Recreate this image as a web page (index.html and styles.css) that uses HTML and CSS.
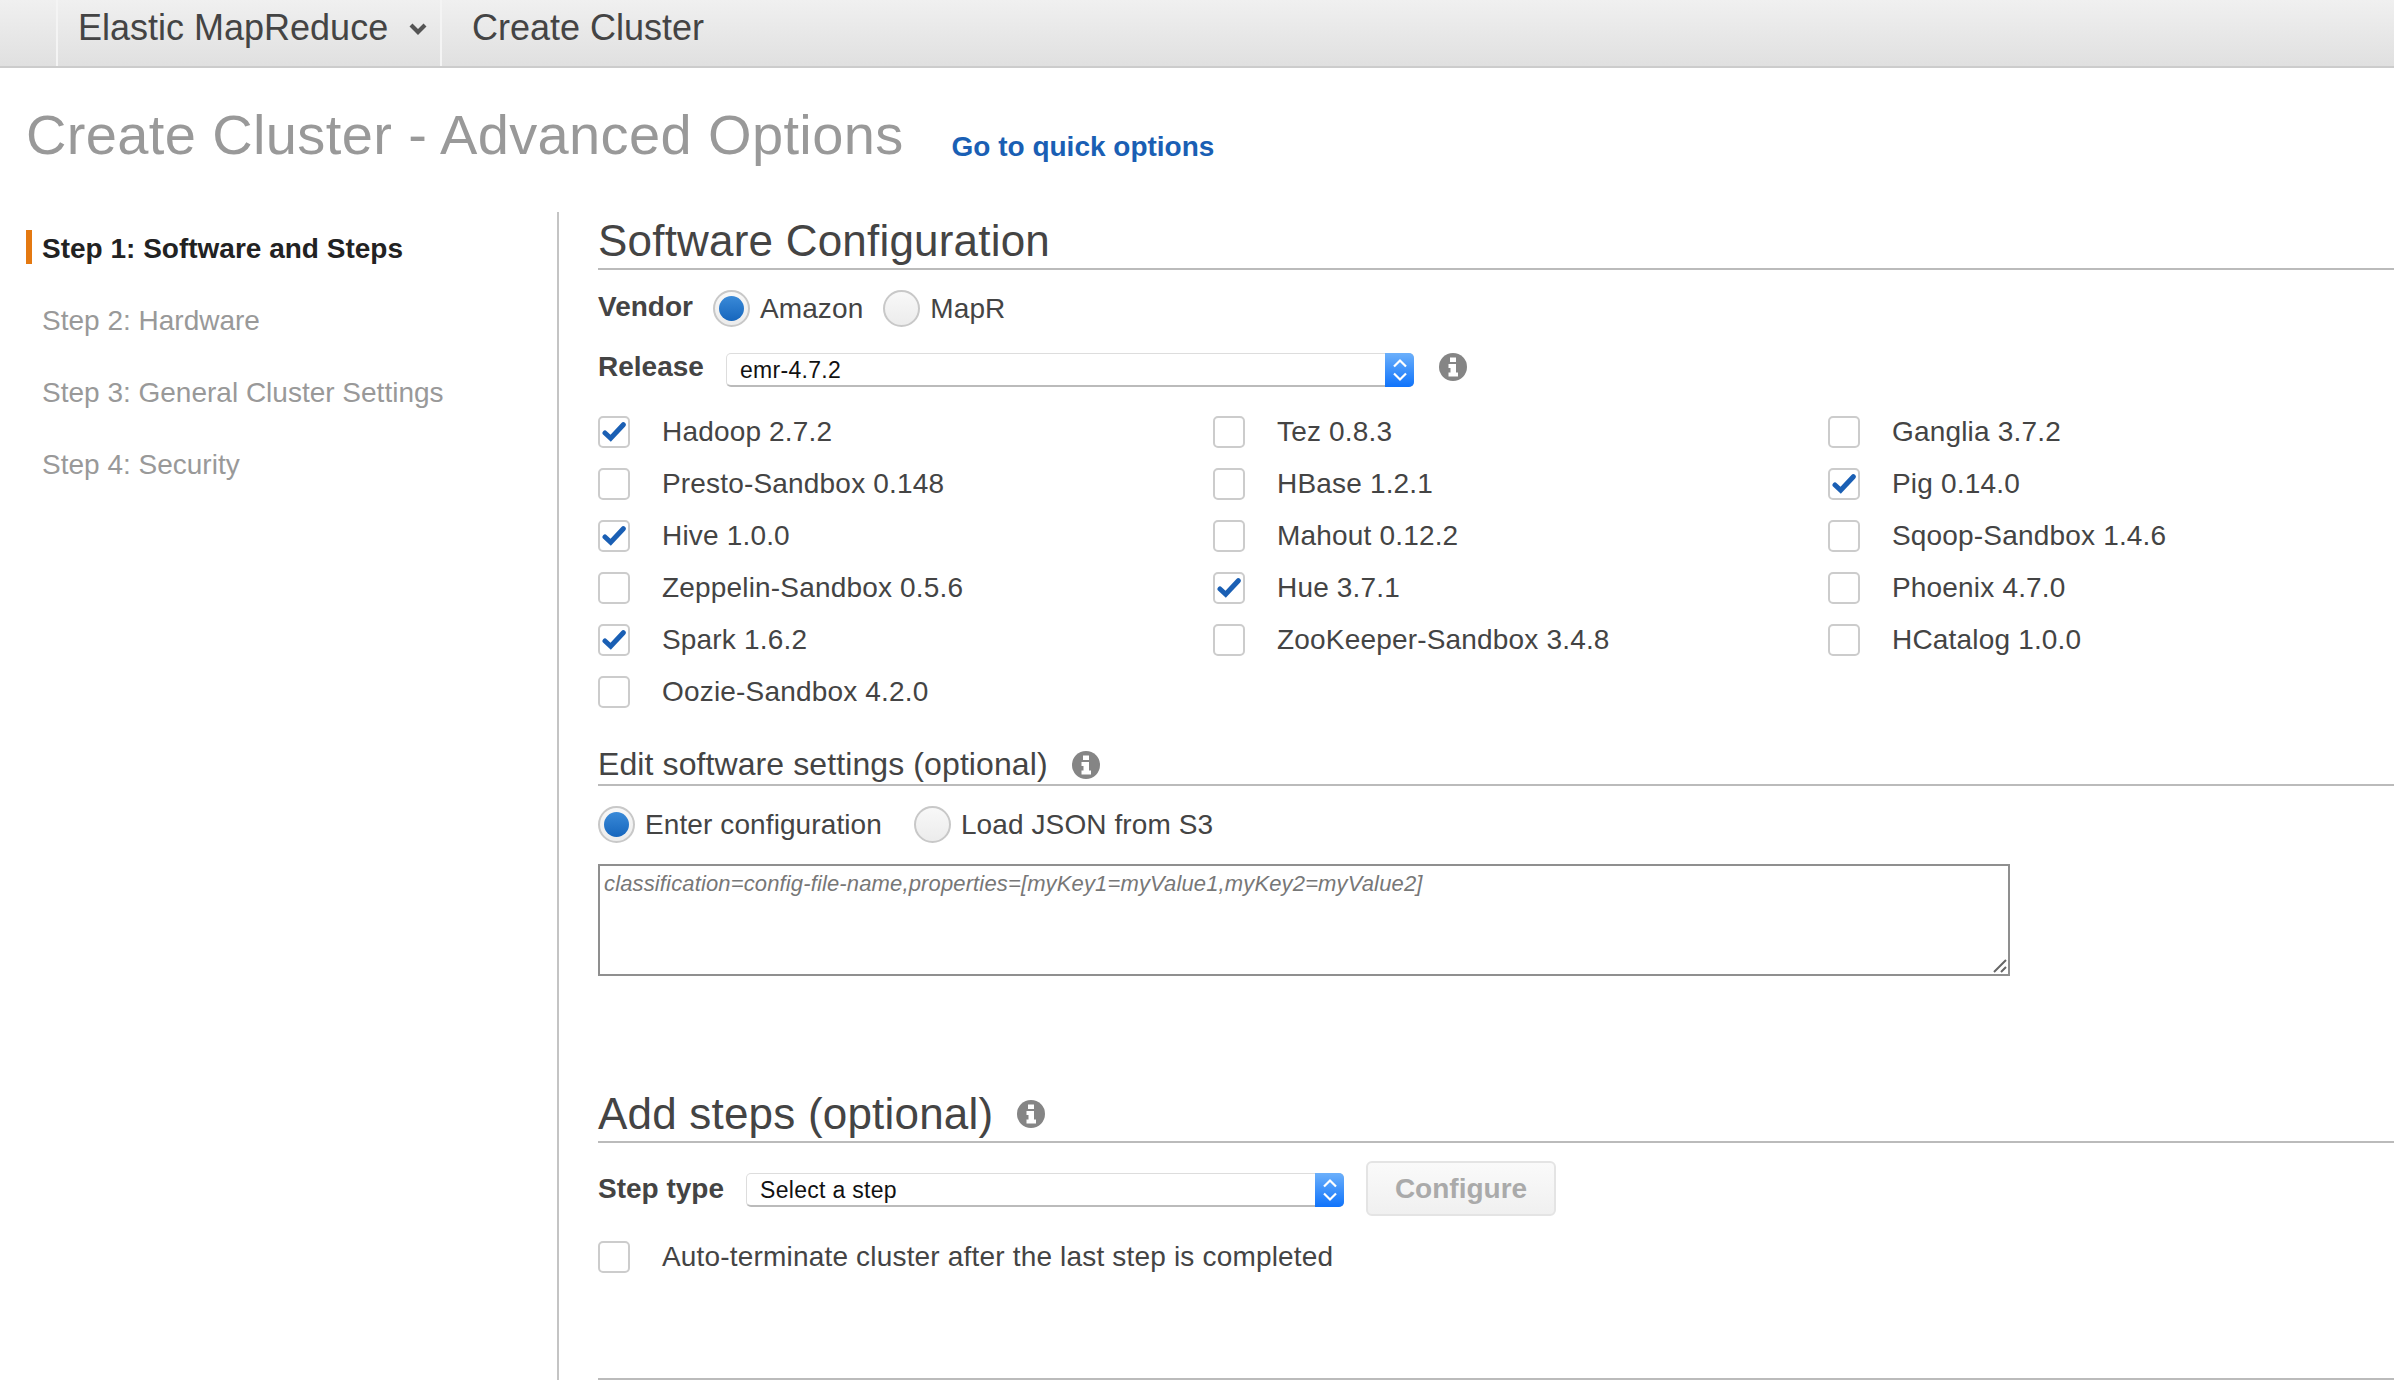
FILE: index.html
```html
<!DOCTYPE html>
<html lang="en">
<head>
    <meta charset="UTF-8">
    <meta name="viewport" content="width=device-width, initial-scale=1.0">
    <title>Create Cluster - Advanced Options</title>
    <link rel="stylesheet" href="styles.css">
</head>

<body>
    <!-- Service bar -->
    <nav class="topbar">
        <div class="topbar-item service">
            Elastic MapReduce
            <svg class="caret" width="18" height="12" viewBox="0 0 18 12"><path d="M2 2 L9 9 L16 2" fill="none" stroke="#555" stroke-width="4.200"/></svg>
        </div>
        <div class="topbar-item">Create Cluster</div>
    </nav>

    <header class="page-head">
        <h1>Create Cluster - Advanced Options</h1>
        <a class="quick-link" href="#">Go to quick options</a>
    </header>

    <div class="wizard">
        <aside class="steps">
            <div class="step active">Step 1: Software and Steps</div>
            <div class="step">Step 2: Hardware</div>
            <div class="step">Step 3: General Cluster Settings</div>
            <div class="step">Step 4: Security</div>
        </aside>

        <main class="content">
            <h2 class="section-title">Software Configuration</h2>

            <div class="field vendor-row">
                <span class="field-label">Vendor</span>
                <span class="radio checked"></span><span class="radio-text">Amazon</span>
                <span class="radio"></span><span class="radio-text">MapR</span>
            </div>

            <div class="field release-row">
                <span class="field-label">Release</span>
                <div class="select release-select">
                    <span class="select-value">emr-4.7.2</span>
                    <span class="select-arrows">
                        <svg width="18" height="26" viewBox="0 0 18 26"><path d="M3 9.500 L9 3.500 L15 9.500 M3 16.500 L9 22.500 L15 16.500" fill="none" stroke="#fff" stroke-width="2.200"/></svg>
                    </span>
                </div>
                <svg class="info release-info" width="28" height="28" viewBox="0 0 28 28"><circle cx="14" cy="14" r="14" fill="#858585"/><path d="M11 4.500h6v4.500h-6z M9.500 11h7.500v8.500h2v4h-9.500v-4h2v-4.500h-2z" fill="#fff"/></svg>
            </div>

            <div class="app-grid">
                <label class="app"><span class="check on"><svg width="24" height="24" viewBox="0 0 24 24"><path d="M3 13 L8.700 18.300 L21.300 4.700" fill="none" stroke="#1a5fb4" stroke-width="5" stroke-linecap="round"/></svg></span>Hadoop 2.7.2</label>
                <label class="app"><span class="check"></span>Tez 0.8.3</label>
                <label class="app"><span class="check"></span>Ganglia 3.7.2</label>

                <label class="app"><span class="check"></span>Presto-Sandbox 0.148</label>
                <label class="app"><span class="check"></span>HBase 1.2.1</label>
                <label class="app"><span class="check on"><svg width="24" height="24" viewBox="0 0 24 24"><path d="M3 13 L8.700 18.300 L21.300 4.700" fill="none" stroke="#1a5fb4" stroke-width="5" stroke-linecap="round"/></svg></span>Pig 0.14.0</label>

                <label class="app"><span class="check on"><svg width="24" height="24" viewBox="0 0 24 24"><path d="M3 13 L8.700 18.300 L21.300 4.700" fill="none" stroke="#1a5fb4" stroke-width="5" stroke-linecap="round"/></svg></span>Hive 1.0.0</label>
                <label class="app"><span class="check"></span>Mahout 0.12.2</label>
                <label class="app"><span class="check"></span>Sqoop-Sandbox 1.4.6</label>

                <label class="app"><span class="check"></span>Zeppelin-Sandbox 0.5.6</label>
                <label class="app"><span class="check on"><svg width="24" height="24" viewBox="0 0 24 24"><path d="M3 13 L8.700 18.300 L21.300 4.700" fill="none" stroke="#1a5fb4" stroke-width="5" stroke-linecap="round"/></svg></span>Hue 3.7.1</label>
                <label class="app"><span class="check"></span>Phoenix 4.7.0</label>

                <label class="app"><span class="check on"><svg width="24" height="24" viewBox="0 0 24 24"><path d="M3 13 L8.700 18.300 L21.300 4.700" fill="none" stroke="#1a5fb4" stroke-width="5" stroke-linecap="round"/></svg></span>Spark 1.6.2</label>
                <label class="app"><span class="check"></span>ZooKeeper-Sandbox 3.4.8</label>
                <label class="app"><span class="check"></span>HCatalog 1.0.0</label>

                <label class="app"><span class="check"></span>Oozie-Sandbox 4.2.0</label>
            </div>

            <h3 class="sub-title">
                Edit software settings (optional)
                <svg class="info" width="28" height="28" viewBox="0 0 28 28"><circle cx="14" cy="14" r="14" fill="#858585"/><path d="M11 4.500h6v4.500h-6z M9.500 11h7.500v8.500h2v4h-9.500v-4h2v-4.500h-2z" fill="#fff"/></svg>
            </h3>

            <div class="field config-row">
                <span class="radio checked"></span><span class="radio-text">Enter configuration</span>
                <span class="radio"></span><span class="radio-text">Load JSON from S3</span>
            </div>

            <div class="config-box">
                <span class="placeholder">classification=config-file-name,properties=[myKey1=myValue1,myKey2=myValue2]</span>
                <svg class="grip" width="16" height="16" viewBox="0 0 16 16"><path d="M2 14 L14 2 M9 14 L14 9" stroke="#666" stroke-width="2"/></svg>
            </div>

            <h2 class="section-title steps-title">
                Add steps (optional)
                <svg class="info" width="28" height="28" viewBox="0 0 28 28"><circle cx="14" cy="14" r="14" fill="#858585"/><path d="M11 4.500h6v4.500h-6z M9.500 11h7.500v8.500h2v4h-9.500v-4h2v-4.500h-2z" fill="#fff"/></svg>
            </h2>

            <div class="field step-row">
                <span class="field-label">Step type</span>
                <div class="select step-select">
                    <span class="select-value">Select a step</span>
                    <span class="select-arrows">
                        <svg width="18" height="26" viewBox="0 0 18 26"><path d="M3 9.500 L9 3.500 L15 9.500 M3 16.500 L9 22.500 L15 16.500" fill="none" stroke="#fff" stroke-width="2.200"/></svg>
                    </span>
                </div>
                <button class="configure" type="button" disabled>Configure</button>
            </div>

            <label class="app auto-term"><span class="check"></span>Auto-terminate cluster after the last step is completed</label>

            <div class="bottom-rule"></div>
        </main>
    </div>
</body>
</html>
```

FILE: styles.css
```css
* {
    box-sizing: border-box;
}

html, body {
    height: 1380px;
    overflow: hidden;
}

body {
    margin: 0;
    background-color: #fff;
    color: #444;
    font-family: "Liberation Sans", Arial, sans-serif;
    font-size: 28px;
}

/* service bar */
.topbar {
    display: flex;
    height: 68px;
    padding-left: 56px;
    background: linear-gradient(#f0f0f0, #e0e0e0);
    border-bottom: 2px solid #ccc;
}

.topbar-item {
    display: flex;
    align-items: center;
    padding: 0 32px 10px 30px;
    border-left: 2px solid #f4f4f4;
    font-size: 36px;
    color: #444;
}

.topbar-item.service {
    width: 384px;
    gap: 21px;
    padding: 0 0 10px 20px;
}

.caret {
    margin-top: 2px;
}

/* page title */
.page-head {
    display: flex;
    align-items: flex-start;
    height: 144px;
    padding: 34px 0 0 26px;
}

h1 {
    margin: 0;
    font-size: 56px;
    font-weight: normal;
    color: #999;
    letter-spacing: 0.37px;
}

.quick-link {
    margin: 29px 0 0 48px;
    font-size: 28px;
    font-weight: bold;
    color: #1a5fb4;
    text-decoration: none;
}

/* layout */
.wizard {
    display: flex;
    height: 1168px;
}

.steps {
    width: 559px;
    flex: none;
    padding: 18px 0 0 26px;
    border-right: 2px solid #c4c4c4;
}

.step {
    height: 34px;
    line-height: 37px;
    margin-bottom: 38px;
    padding-left: 10px;
    border-left: 6px solid transparent;
    color: #999;
}

.step.active {
    border-left-color: #e47911;
    color: #222;
    font-weight: bold;
}

.content {
    flex: 1;
    padding-left: 39px;
}

/* headings */
.section-title {
    display: flex;
    align-items: center;
    gap: 24px;
    height: 58px;
    margin: 0;
    padding-top: 2px;
    border-bottom: 2px solid #bbb;
    font-size: 44px;
    font-weight: normal;
    color: #444;
    letter-spacing: 0.2px;
}

.sub-title {
    display: flex;
    align-items: center;
    gap: 24px;
    height: 44px;
    margin: 24px 0 0;
    padding-top: 3px;
    border-bottom: 2px solid #bbb;
    font-size: 32px;
    font-weight: normal;
    color: #444;
    letter-spacing: 0.1px;
}

/* form rows */
.field {
    display: flex;
    align-items: center;
}

.field-label {
    font-weight: bold;
    color: #444;
}

.vendor-row {
    height: 37px;
    margin-top: 20px;
}

.vendor-row .field-label {
    width: 115px;
    margin-top: -4px;
}

.release-row {
    height: 34px;
    margin-top: 26px;
}

.release-row .field-label {
    width: 128px;
    margin-top: -6px;
}

.radio {
    flex: none;
    position: relative;
    width: 37px;
    height: 37px;
    border: 2px solid #c8c8c8;
    border-radius: 50%;
    background: linear-gradient(#f8f8f8, #ececec);
}

.radio.checked::after {
    content: "";
    position: absolute;
    top: 4px;
    left: 4px;
    width: 25px;
    height: 25px;
    border-radius: 50%;
    background: linear-gradient(#3a8ad8, #1666bd);
}

.radio-text {
    margin: 0 20px 0 10px;
    letter-spacing: 0.1px;
}

.config-row .radio-text {
    margin-right: 32px;
}

.select {
    display: flex;
    height: 34px;
    border: 1px solid #ddd;
    border-bottom: 2px solid #bbb;
    border-radius: 5px;
    background-color: #fff;
}

.release-select {
    width: 688px;
}

.step-select {
    width: 598px;
}

.select-value {
    flex: 1;
    padding-left: 13px;
    font-size: 23px;
    line-height: 33px;
    color: #111;
    letter-spacing: 0.3px;
}

.select-arrows {
    display: flex;
    align-items: center;
    justify-content: center;
    width: 29px;
    margin: -1px -1px -2px 0;
    border-radius: 0 5px 5px 0;
    background: linear-gradient(#6cb0fb, #0f73fb);
}

.info {
    flex: none;
}

.release-info {
    margin: -6px 0 0 25px;
}

/* applications */
.app-grid {
    display: grid;
    grid-template-columns: repeat(3, 615px);
    grid-auto-rows: 52px;
    margin-top: 19px;
}

.app {
    display: flex;
    align-items: center;
    color: #444;
    letter-spacing: 0.18px;
}

.check {
    display: flex;
    align-items: center;
    justify-content: center;
    flex: none;
    width: 32px;
    height: 32px;
    margin-right: 32px;
    border: 2px solid #ccc;
    border-radius: 5px;
    background-color: #fff;
}

/* configuration */
.config-row {
    height: 37px;
    margin-top: 20px;
}

.config-box {
    position: relative;
    width: 1412px;
    height: 112px;
    margin-top: 21px;
    padding: 5px 4px;
    border: 2px solid #8f8f8f;
}

.placeholder {
    display: block;
    font-size: 22px;
    line-height: 26px;
    font-style: italic;
    color: #777;
    letter-spacing: 0.14px;
}

.grip {
    position: absolute;
    right: 0;
    bottom: 0;
}

/* steps */
.steps-title {
    height: 57px;
    margin-top: 110px;
    padding-top: 0;
}

.step-row {
    height: 56px;
    margin-top: 17px;
}

.step-row .field-label {
    width: 148px;
    margin-top: 2px;
}

.step-select {
    margin-top: 3px;
}

.configure {
    width: 190px;
    height: 55px;
    margin-left: 22px;
    padding-top: 3px;
    border: 2px solid #e4e4e4;
    border-radius: 6px;
    background: linear-gradient(#fafafa, #f0f0f0);
    font-family: inherit;
    font-size: 28px;
    font-weight: bold;
    color: #aaa;
}

.auto-term {
    height: 32px;
    margin-top: 25px;
}

.bottom-rule {
    height: 2px;
    margin-top: 105px;
    background-color: #bbb;
}
```
